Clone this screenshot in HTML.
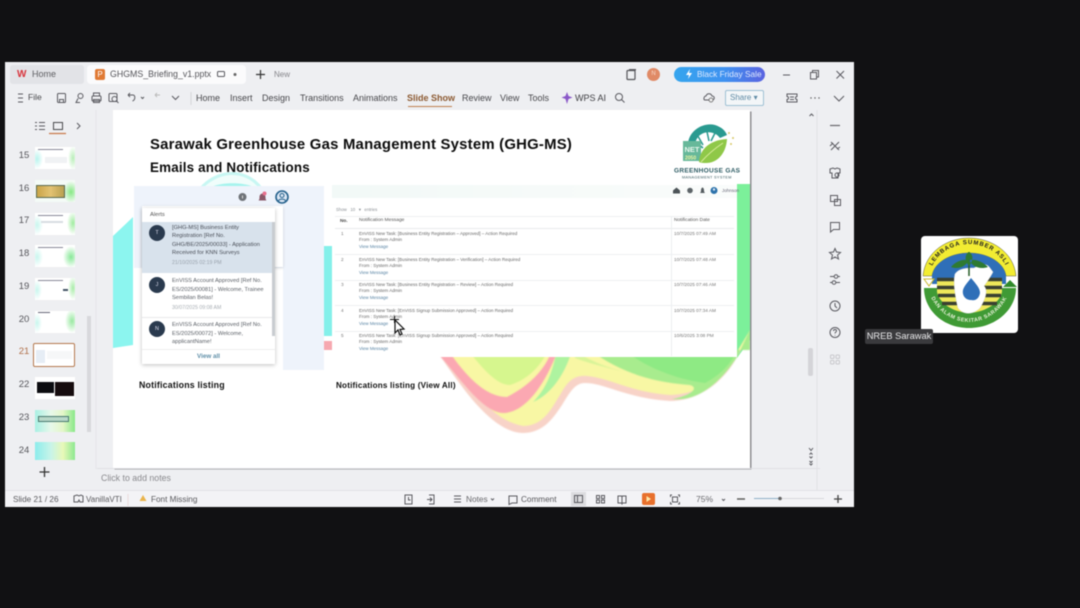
<!DOCTYPE html>
<html>
<head>
<meta charset="utf-8">
<title>GHGMS Briefing</title>
<style>
html,body{margin:0;padding:0;width:1080px;height:608px;overflow:hidden;background:#111113;}
body{font-family:"Liberation Sans",sans-serif;color:#4a4a4e;position:relative;}
.a{position:absolute;white-space:nowrap;}
#win{position:absolute;left:5px;top:62px;width:849px;height:445px;background:#eeeff2;overflow:hidden;}
#root{position:absolute;left:0;top:0;width:1080px;height:608px;filter:blur(.45px);}
.t{font-size:9px;line-height:11px;color:#47474b;}
.th{position:absolute;left:35px;width:40px;height:22px;background:#fff;overflow:hidden;}
.n{position:absolute;left:15px;width:18px;font-size:9.5px;color:#55555a;text-align:center;line-height:12px;}
svg{position:absolute;overflow:visible;}
.ic{fill:none;stroke:#5a5a60;stroke-width:1;}
.r1{font-size:4.500px;color:#666;line-height:6.400px;left:246px;}
.r0{font-size:4.700px;color:#777;line-height:6.400px;left:228px;}
.r2{font-size:4.700px;color:#777;line-height:6.400px;left:561px;}
.rl{left:222px;width:399px;height:1px;background:#eef0f2;}
</style>
</head>
<body>
<div id="root">
<div id="win"></div>

<!-- tab bar -->
<div class="a" style="left:10px;top:65px;width:74px;height:19px;background:#e2e3e7;border-radius:3px;"></div>
<div class="a" style="left:87px;top:65px;width:159px;height:19px;background:#fbfbfc;border-radius:4px;"></div>
<div class="a" style="left:17px;top:69px;font-size:10px;font-weight:bold;color:#d8343c;line-height:11px;">W</div>
<div class="a t" style="left:32px;top:69px;color:#5e5e62;">Home</div>
<div class="a" style="left:95px;top:69px;width:10px;height:11px;background:#e07a34;border-radius:2px;color:#fff;font-size:8px;line-height:11px;text-align:center;">P</div>
<div class="a t" style="left:110px;top:69px;color:#55555a;font-size:8.800px;">GHGMS_Briefing_v1.pptx</div>
<svg style="left:0;top:0" width="1" height="1"><rect class="ic" x="217.500" y="71.500" width="7" height="5" rx="1"/><circle cx="235" cy="74.500" r="1.500" fill="#666"/>
<path class="ic" style="stroke:#333;stroke-width:1.200" d="M256 74.500h9M260.500 70v9"/></svg>
<div class="a" style="left:274px;top:70px;font-size:8px;color:#85858a;line-height:10px;">New</div>
<svg style="left:0;top:0" width="1" height="1"><rect x="627" y="70.500" width="8" height="9" rx="1" fill="none" stroke="#55555a" stroke-width="1.200"/><path class="ic" d="M629 69.500h6.500v1"/></svg>
<div class="a" style="left:647px;top:68px;width:13px;height:13px;border-radius:50%;background:#e08a66;color:#f8d8c8;font-size:6px;line-height:13px;text-align:center;">N</div>
<div class="a" style="left:674px;top:67px;width:91px;height:15px;border-radius:8px;background:linear-gradient(90deg,#35a5ee 0%,#3f92f0 55%,#5a63e0 100%);color:#dfeaff;font-size:8.300px;line-height:15px;text-indent:23px;">Black Friday Sale</div>
<svg style="left:0;top:0" width="1" height="1"><path d="M690 69l-4 6h3l-1 4 4-6h-3z" fill="#fff"/>
<path class="ic" d="M783 75h7"/><rect class="ic" x="810.500" y="72.500" width="6" height="6.500"/><path class="ic" d="M812.500 72.500v-2h6v6.500h-2"/><path class="ic" d="M836.500 71l7.500 7.500M844 71l-7.500 7.500"/></svg>

<!-- menu bar -->
<svg style="left:0;top:0" width="1" height="1"><path class="ic" d="M18 94h5M18 98h5M18 102h5"/>
<rect class="ic" x="57.500" y="93.500" width="8" height="9" rx="1"/><path class="ic" d="M59.500 99.500h4v3h-4z"/>
<circle class="ic" cx="80.500" cy="96" r="2.500"/><path class="ic" d="M78 98.500l-2 4h4"/>
<rect class="ic" x="92" y="96" width="9" height="5" rx="1"/><path class="ic" d="M93.500 96v-3h6v3M93.500 99.500h6v3h-6z"/>
<rect class="ic" x="109" y="93.500" width="8" height="8" rx="1"/><circle class="ic" cx="114.500" cy="99" r="2.500"/><path class="ic" d="M116.500 101l2 2"/>
<path class="ic" d="M128 95h5c2.500 0 2.500 5-.5 6M128 95l2-2M128 95l2 2"/><path class="ic" d="M141 97l1.500 1.500 1.500-1.500"/>
<path class="ic" style="stroke:#bbb" d="M155 95h5M155 95l2-2M155 95l2 2"/>
<path class="ic" d="M172 96l3.500 3.500 3.500-3.500"/><path d="M191 92v13" stroke="#d5d5d9"/></svg>
<div class="a t" style="left:28px;top:92px;font-size:8.500px;">File</div>
<div class="a t" style="left:196px;top:93px;">Home</div>
<div class="a t" style="left:230px;top:93px;">Insert</div>
<div class="a t" style="left:262px;top:93px;">Design</div>
<div class="a t" style="left:300px;top:93px;">Transitions</div>
<div class="a t" style="left:353px;top:93px;">Animations</div>
<div class="a t" style="left:407px;top:93px;color:#8c5a32;font-weight:bold;">Slide Show</div>
<div class="a" style="left:408px;top:106px;width:44px;height:1px;background:#c08050;"></div>
<div class="a t" style="left:462px;top:93px;">Review</div>
<div class="a t" style="left:500px;top:93px;">View</div>
<div class="a t" style="left:528px;top:93px;">Tools</div>
<svg style="left:0;top:0" width="1" height="1"><path d="M567 92l1.500 4 4 1.500-4 1.500-1.500 5-1.500-5-4-1.500 4-1.500z" fill="#8a58c8"/>
<circle class="ic" cx="619" cy="97" r="3.500"/><path class="ic" d="M621.500 99.500l3 3"/>
<path class="ic" d="M705 100h7c3 0 3-4 0-4-1-3-5-3-6 0-2 0-3 4-1 4z"/><circle cx="711" cy="100" r="2" fill="#eee" stroke="#666" stroke-width=".8"/>
<path class="ic" d="M787 94h10v2.500a1.500 1.500 0 000 3V102h-10v-2.500a1.500 1.500 0 000-3zM790 97h4M790 99.500h4"/>
<circle cx="811" cy="98" r=".7" fill="#555"/><circle cx="815" cy="98" r=".7" fill="#555"/><circle cx="819" cy="98" r=".7" fill="#555"/>
<path class="ic" d="M834 96l5 5 5-5"/></svg>
<div class="a t" style="left:575px;top:93px;color:#3e3e42;">WPS AI</div>
<div class="a" style="left:725px;top:90px;width:37px;height:14px;border:1px solid #9fc1d4;border-radius:2px;background:#f3f6f8;color:#5f8ba5;font-size:8px;line-height:14px;text-indent:4px;">Share &#9662;</div>

<!-- left panel -->
<svg style="left:0;top:0" width="1" height="1"><path class="ic" d="M35 122.500h2M39 122.500h6M35 126h2M39 126h6M35 129.500h2M39 129.500h6"/>
<rect x="53.500" y="122.500" width="9" height="7" fill="none" stroke="#4a4a4e"/><path d="M49 133.500h17" stroke="#c9794a" stroke-width="1.200"/>
<path class="ic" d="M77 123l3 3-3 3"/>
<path d="M96 110v359" stroke="#e4e4e8"/><path d="M44.500 467v10M39.500 472h10" stroke="#333" stroke-width="1.300"/></svg>
<div class="a" style="left:87px;top:316px;width:4px;height:116px;background:#d8d8dc;"></div>

<div class="n" style="top:150px">15</div><div class="n" style="top:183px">16</div><div class="n" style="top:215px">17</div><div class="n" style="top:248px">18</div><div class="n" style="top:281px">19</div><div class="n" style="top:314px">20</div><div class="n" style="top:346px;color:#b0704a">21</div><div class="n" style="top:379px">22</div><div class="n" style="top:412px">23</div><div class="n" style="top:445px">24</div>

<div class="th" style="top:147px;background:radial-gradient(ellipse 6px 10px at 2px 12px,#b8f4ee,transparent),radial-gradient(ellipse 5px 12px at 38px 11px,#b8eeb8,transparent),#fff;"><div class="a" style="left:3px;top:2px;width:25px;height:1px;background:#889;"></div><div class="a" style="left:10px;top:10px;width:22px;height:6px;background:#f0f2f4;"></div></div>
<div class="th" style="top:180px;background:radial-gradient(ellipse 8px 11px at 36px 12px,#86e884,transparent),#f4fbf6;"><div class="a" style="left:1px;top:5px;width:29px;height:13px;background:linear-gradient(90deg,#c9a548,#e3c272,#b8a050);border:1px solid #5a6a50;box-sizing:border-box;"></div></div>
<div class="th" style="top:213px;background:radial-gradient(ellipse 6px 10px at 2px 12px,#c8f6ee,transparent),radial-gradient(ellipse 6px 12px at 38px 10px,#a0eca0,transparent),#fff;"><div class="a" style="left:3px;top:2px;width:25px;height:1px;background:#889;"></div><div class="a" style="left:6px;top:8px;width:22px;height:2px;background:#d8dde2;"></div></div>
<div class="th" style="top:245px;background:radial-gradient(ellipse 6px 10px at 2px 12px,#c8f6ee,transparent),radial-gradient(ellipse 8px 11px at 36px 12px,#88e898,transparent),#fff;"><div class="a" style="left:3px;top:2px;width:25px;height:1px;background:#889;"></div></div>
<div class="th" style="top:278px;background:radial-gradient(ellipse 5px 10px at 2px 12px,#c8f6ee,transparent),radial-gradient(ellipse 5px 12px at 38px 10px,#a8eca8,transparent),#fff;"><div class="a" style="left:3px;top:2px;width:25px;height:1px;background:#889;"></div><div class="a" style="left:28px;top:11px;width:5px;height:2px;background:#456;"></div></div>
<div class="th" style="top:311px;background:radial-gradient(ellipse 5px 10px at 2px 12px,#c8f6ee,transparent),radial-gradient(ellipse 7px 12px at 37px 10px,#98e8a0,transparent),#fff;"><div class="a" style="left:3px;top:1px;width:12px;height:1px;background:#667;"></div></div>
<div class="a" style="left:33px;top:343px;width:42px;height:24px;border:1px solid #b5794e;border-radius:2px;background:#fff;box-sizing:border-box;"></div>
<div class="a" style="left:36px;top:350px;width:9px;height:13px;background:#e6edf5;"></div><div class="a" style="left:47px;top:351px;width:25px;height:8px;background:#f6f7f8;"></div>
<div class="th" style="top:377px;"><div class="a" style="left:2px;top:5px;width:17px;height:11px;background:#0c0c10;"></div><div class="a" style="left:20px;top:5px;width:19px;height:14px;background:#160c0e;"></div></div>
<div class="th" style="top:410px;background:linear-gradient(90deg,#a8f0e4 0%,#e8f8ea 40%,#e4f6c8 70%,#88e888 100%);"><div class="a" style="left:3px;top:6px;width:29px;height:4px;border:1px solid #4a7a70;background:#b8d8c8;"></div></div>
<div class="th" style="top:442px;height:18px;background:linear-gradient(90deg,#8cecec 0%,#c8f4e8 40%,#e8f8b8 70%,#8ce890 100%);"></div>

<!-- slide -->
<div class="a" style="left:113px;top:110px;width:637px;height:358px;background:#fff;box-shadow:1.500px 1.500px 0 #8e8e92;overflow:hidden;">
<svg style="left:0;top:0" width="637" height="358" viewBox="113 110 637 358">
<!-- left cyan -->
<path d="M113 236L133 217V345L113 348Z" fill="#8cf5ef"/>
<!-- top arc -->
<path d="M200 187C210 176 222 172 232 172 245 172 255 178 262 187Z" fill="#c8f7f3"/>
<path d="M204 187C214 178 224 175 232 175 243 175 252 180 258 187Z" fill="#f0fdfb"/>
<path d="M211 187C222 182 243 182 254 187Z" fill="#a6f4ee"/>
<!-- cyan / pink strip -->
<path d="M324 246H332V336H324Z" fill="#84f0ea"/><path d="M324 341H332V350H324Z" fill="#f6a8b0"/>
<!-- right green -->
<path d="M737 184H750V340L737 358Z" fill="#7cf09a"/>
<!-- wave -->
<g style="filter:blur(.5px)">
<path d="M436 350C455 378 470 398 480 408 495 424 510 433 523 433 545 433 555 415 562 405 570 392 575 383 585 383 605 383 625 398 670 401 700 401 725 380 737 357L750 335V350Z" fill="#f8d3c8"/>
<path d="M440 350C470 385 490 420 523 426 545 426 553 405 560 395 568 380 575 375 587 376 610 378 630 392 670 395 700 394 722 378 735 355L750 330V350Z" fill="#f8f7a4"/>
<path d="M590 350C620 372 650 382 690 385 700 388 690 396 672 399 700 402 722 380 737 357L750 330V350Z" fill="#a8ec8e"/>
<path d="M625 350C645 368 680 380 705 383 722 374 732 362 737 350Z" fill="#8eea84"/>
<path d="M575 350C590 362 610 368 625 372 600 366 585 362 575 358Z" fill="#d8f498"/>
<path d="M468 350C485 372 498 385 510 385 526 380 540 368 548 350Z" fill="#d6f68e"/>
<path d="M436 352C455 370 480 412 503 413 525 413 545 385 558 350H552C545 370 530 385 507 397 485 397 465 375 448 350Z" fill="#fba8b2"/>
<path d="M557 350C552 375 545 390 533 402 550 395 565 375 572 350Z" fill="#aef3a0"/>
</g>
</svg>

<div class="a" style="left:37px;top:27px;font-size:14.900px;font-weight:bold;color:#0c0c0c;line-height:17px;letter-spacing:.22px;">Sarawak Greenhouse Gas Management System (GHG-MS)</div>
<div class="a" style="left:37px;top:50px;font-size:13.400px;font-weight:bold;color:#0c0c0c;line-height:16px;letter-spacing:.18px;">Emails and Notifications</div>

<!-- left mock -->
<div class="a" style="left:21px;top:76px;width:190px;height:82px;background:#eef3fb;"></div>
<div class="a" style="left:170px;top:158px;width:41px;height:102px;background:#eef3fb;"></div>
<div class="a" style="left:29px;top:96px;width:141px;height:61px;background:#fff;box-shadow:0 1px 3px rgba(0,0,0,.14);"></div>
<svg style="left:0;top:0" width="200" height="100" viewBox="113 110 200 100">
<circle cx="242.500" cy="197" r="4" fill="#6f7378"/><path d="M242.500 195.500v3" stroke="#ddd" stroke-width="1"/>
<path d="M258.500 200.500c1-1 1-2 1-3.500 0-2 1.500-3.500 3-3.500s3 1.500 3 3.500c0 1.500 0 2.500 1 3.500z" fill="#8a5868"/><circle cx="264.500" cy="193.500" r="2" fill="#e76f8d"/>
<circle cx="282" cy="197" r="6" fill="#dce7f4" stroke="#24618c" stroke-width="1.600"/><circle cx="282" cy="195.500" r="2" fill="none" stroke="#24618c"/><path d="M278.500 201c.5-2.500 6.500-2.500 7 0" fill="none" stroke="#24618c"/>
</svg>
<div class="a" style="left:29px;top:98px;width:133px;height:156px;background:#fff;box-shadow:0 1px 4px rgba(0,0,0,.25);overflow:hidden;">
  <div class="a" style="left:8px;top:3px;font-size:5.800px;color:#555;line-height:8px;">Alerts</div>
  <div class="a" style="left:0;top:14px;width:130px;height:51px;background:#d8e2ec;"></div>
  <div class="a" style="left:130px;top:14px;width:2.500px;height:114px;background:#c8ccd0;"></div>
  <div class="a" style="left:7px;top:17px;width:16px;height:16px;border-radius:50%;background:#2a3a4e;color:#dde;font-size:5.500px;line-height:16px;text-align:center;">T</div>
  <div class="a" style="left:30px;top:16px;font-size:5.700px;color:#4a4f58;line-height:8.300px;">[GHG-MS] Business Entity<br>Registration [Ref No.<br>GHG/BE/2025/00033] - Application<br>Received for KNN Surveys</div>
  <div class="a" style="left:30px;top:51px;font-size:5.200px;color:#99a2ac;line-height:8px;">21/10/2025 02:19 PM</div>
  <div class="a" style="left:7px;top:69px;width:16px;height:16px;border-radius:50%;background:#2a3a4e;color:#dde;font-size:5.500px;line-height:16px;text-align:center;">J</div>
  <div class="a" style="left:30px;top:69px;font-size:5.700px;color:#5a5f66;line-height:8.600px;">EnVISS Account Approved [Ref No.<br>ES/2025/00081] - Welcome, Trainee<br>Sembilan Belas!</div>
  <div class="a" style="left:30px;top:96px;font-size:5.200px;color:#a8aeb4;line-height:8px;">30/07/2025 09:08 AM</div>
  <div class="a" style="left:0;top:109px;width:130px;height:1px;background:#e8e8ea;"></div>
  <div class="a" style="left:7px;top:113px;width:16px;height:16px;border-radius:50%;background:#2a3a4e;color:#dde;font-size:5.500px;line-height:16px;text-align:center;">N</div>
  <div class="a" style="left:30px;top:113px;font-size:5.700px;color:#5a5f66;line-height:8.600px;">EnVISS Account Approved [Ref No.<br>ES/2025/00072] - Welcome,<br>applicantName!</div>
  <div class="a" style="left:0;top:141px;width:133px;height:15px;background:#fff;border-top:1px solid #eee;box-sizing:border-box;text-align:center;font-size:6.300px;font-weight:bold;color:#5f8fa8;line-height:14px;">View all</div>
</div>
<div class="a" style="left:26px;top:270px;font-size:8.800px;font-weight:bold;color:#111;line-height:11px;letter-spacing:.2px;">Notifications listing</div>
<div class="a" style="left:223px;top:270px;font-size:8.100px;font-weight:bold;color:#111;line-height:11px;letter-spacing:.2px;">Notifications listing (View All)</div>

<!-- right mock -->
<div class="a" style="left:219px;top:75px;width:405px;height:172px;background:#fff;"></div>
<div class="a" style="left:219px;top:75px;width:405px;height:13px;background:linear-gradient(90deg,#f2f9f7,#fafcfb);"></div>
<svg style="left:0;top:0" width="640" height="120" viewBox="113 110 640 120">
<path d="M673 190.500l3.500-3 3.500 3v3h-7z" fill="#4d5458"/><circle cx="690" cy="190.500" r="2.800" fill="#5d6468"/><path d="M700 193c1-1 1-2 1-3 0-1.500 1-2.500 1.500-2.500s1.500 1 1.500 2.500c0 1 0 2 1 3z" fill="#555c60"/><circle cx="714" cy="190.500" r="3.500" fill="#2d72ab"/><circle cx="714" cy="189.500" r="1.200" fill="#dce7f4"/>
</svg>
<div class="a" style="left:609px;top:77px;font-size:4.500px;color:#667;line-height:7px;">Johnson</div>
<div class="a" style="left:223px;top:96px;font-size:4.300px;color:#8a8f94;line-height:7px;">Show &nbsp; 10 &nbsp; &#9662; &nbsp; entries</div>
<div class="a rl" style="top:106px;"></div>
<div class="a rl" style="top:118px;background:#e8eaec;"></div>
<div class="a" style="left:227px;top:107px;font-size:4.700px;color:#444;line-height:8px;font-weight:bold;">No.</div>
<div class="a" style="left:246px;top:107px;font-size:4.900px;color:#555;line-height:8px;">Notification Message</div>
<div class="a" style="left:561px;top:107px;font-size:4.900px;color:#555;line-height:8px;">Notification Date</div>
<div class="a" style="left:558px;top:106px;width:1px;height:140px;background:#eceef0;"></div>

<div class="a r0" style="top:121px;">1</div>
<div class="a r1" style="top:121px;">EnVISS New Task: [Business Entity Registration – Approved] – Action Required<br>From : System Admin<br><span style="color:#5a85a5">View Message</span></div>
<div class="a r2" style="top:121px;">10/7/2025 07:49 AM</div>
<div class="a rl" style="top:144px;"></div>

<div class="a r0" style="top:147px;">2</div>
<div class="a r1" style="top:147px;">EnVISS New Task: [Business Entity Registration – Verification] – Action Required<br>From : System Admin<br><span style="color:#5a85a5">View Message</span></div>
<div class="a r2" style="top:147px;">10/7/2025 07:48 AM</div>
<div class="a rl" style="top:170px;"></div>

<div class="a r0" style="top:172px;">3</div>
<div class="a r1" style="top:172px;">EnVISS New Task: [Business Entity Registration – Review] – Action Required<br>From : System Admin<br><span style="color:#5a85a5">View Message</span></div>
<div class="a r2" style="top:172px;">10/7/2025 07:46 AM</div>
<div class="a rl" style="top:195px;"></div>

<div class="a r0" style="top:198px;">4</div>
<div class="a r1" style="top:198px;">EnVISS New Task: [EnVISS Signup Submission Approved] – Action Required<br>From : System Admin<br><span style="color:#5a85a5">View Message</span></div>
<div class="a r2" style="top:198px;">10/7/2025 07:34 AM</div>
<div class="a rl" style="top:221px;"></div>

<div class="a r0" style="top:223px;">5</div>
<div class="a r1" style="top:223px;">EnVISS New Task: [EnVISS Signup Submission Approved] – Action Required<br>From : System Admin<br><span style="color:#5a85a5">View Message</span></div>
<div class="a r2" style="top:223px;">10/6/2025 3:08 PM</div>

<!-- GHG logo -->
<svg style="left:560px;top:11px" width="72" height="60" viewBox="0 0 72 60">
<path d="M15 24C15 10 30 1 42 4 48 6 52 9 54 14L47 17C42 10 31 9 25 16 23 19 22 21 22 24Z" fill="#2a9a90"/>
<path d="M22 10L30 24M33 6L36 20M44 8L38 20M19 18L30 27" stroke="#2a9a90" stroke-width="1.500"/>
<rect x="10" y="20" width="18" height="20" fill="#67b89a"/>
<text x="11.500" y="31" font-family="Liberation Sans" font-size="7.500" font-weight="bold" fill="#e9f7ee">NET</text>
<text x="12" y="38.500" font-family="Liberation Sans" font-size="5" font-weight="bold" fill="#eef5a0">2050</text>
<path d="M26 41C27 27 38 19 54 18 53 33 44 42 33 42 31 42 28 42 26 41Z" fill="#8fc848"/>
<path d="M28 41C35 33 41 28 50 22" stroke="#d8ec9a" stroke-width="1" fill="none"/>
<circle cx="56" cy="12" r="1" fill="#d8c868"/><circle cx="60" cy="17" r="1" fill="#d8c868"/><circle cx="58" cy="23" r="1" fill="#d8c868"/>
<text x="1" y="51.500" font-family="Liberation Sans" font-size="6.500" font-weight="bold" fill="#2b5a62" letter-spacing=".3">GREENHOUSE GAS</text>
<text x="9" y="57.500" font-family="Liberation Sans" font-size="3.800" fill="#33565c" letter-spacing=".35">MANAGEMENT SYSTEM</text>
</svg>

<!-- cursor -->
<svg style="left:276px;top:206px" width="16" height="22" viewBox="0 0 16 22"><path d="M6 4v13l3-3 2 5 2-1-2-4.500 4-.5z" fill="#fff" stroke="#111" stroke-width="1.200"/><path d="M1 3.500h9M5.500 0v7" stroke="#111" stroke-width="1"/></svg>
</div>

<!-- notes -->
<div class="a" style="left:101px;top:473px;font-size:8.800px;color:#8a8a8e;line-height:11px;">Click to add notes</div>

<!-- right scrollbar and rail -->
<svg style="left:0;top:0" width="1" height="1">
<path d="M97 468.500h723" stroke="#e0e0e4"/>
<path d="M817 110v381" stroke="#e2e2e6"/>
<path d="M809.500 116l2-2 2 2" class="ic"/>
<path d="M809 448l2 2.500 2-2.500" class="ic"/><path class="ic" d="M809.500 454.500l1.500-1.500 1.500 1.500M809.500 456.500l1.500 1.500 1.500-1.500M809.500 461l1.500 1.500 1.500-1.500M809.500 463.500l1.500 1.500 1.500-1.500"/>
<path d="M830 125.500h10" stroke="#66666a" stroke-width="1.200"/>
<path class="ic" d="M831 142l8 8M839 142l-8 8M830 146l3-3M837 149l3-2"/>
<path class="ic" d="M830 169l3-1 2 1 2-1 3 1v4h-2v5h-6v-5h-2z"/><circle class="ic" cx="837" cy="175" r="2"/>
<rect class="ic" x="830.500" y="195.500" width="7" height="6"/><rect class="ic" x="834.500" y="199.500" width="6" height="6" fill="#eeeff2"/>
<path class="ic" d="M830.500 222.500h9v7h-6l-3 2.500z"/>
<path class="ic" d="M835 248.500l1.500 3.500 4 .5-3 2.500 1 4-3.500-2-3.500 2 1-4-3-2.500 4-.5z"/>
<path class="ic" d="M830 276.500h4M838 276.500h2M830 282.500h2M836 282.500h4"/><circle class="ic" cx="836" cy="276.500" r="1.800"/><circle class="ic" cx="834" cy="282.500" r="1.800"/>
<circle class="ic" cx="835" cy="306" r="5"/><path class="ic" d="M835 303v3l2 2"/>
<circle class="ic" cx="835" cy="332.500" r="5"/><path class="ic" d="M833.500 331c0-2 3-2 3 0 0 1-1.500 1-1.500 2.500M835 335v.5"/>
<g fill="none" stroke="#c8c8cc"><rect x="830.500" y="355" width="3.500" height="3.500" rx="1"/><rect x="836" y="355" width="3.500" height="3.500" rx="1"/><rect x="830.500" y="360.500" width="3.500" height="3.500" rx="1"/><rect x="836" y="360.500" width="3.500" height="3.500" rx="1"/></g>
</svg>
<div class="a" style="left:808px;top:348px;width:5px;height:28px;background:#d4d4d8;border-radius:2px;"></div>

<!-- status bar -->
<div class="a" style="left:5px;top:491px;width:849px;height:16px;background:#f3f3f6;"></div>
<div class="a" style="left:5px;top:490px;width:849px;height:1px;background:#e2e2e6;"></div>
<div class="a" style="left:13px;top:494px;font-size:8.200px;color:#5a5a5e;line-height:11px;">Slide 21 / 26</div>
<svg style="left:0;top:0" width="1" height="1"><path class="ic" d="M74 496l3-1 2 1 2-1 2 1v6h-3l-1-2-1 2h-4z"/><path d="M128 494v12" stroke="#eadada"/><path d="M143 495l3.500 6h-7z" fill="#e9b44c"/>
<rect class="ic" x="405" y="495" width="7" height="9"/><path class="ic" d="M408.500 497v3h2"/>
<path class="ic" d="M429 495h5v9h-5M427 499.500h5M430 497.500l2 2-2 2"/>
<path class="ic" d="M454 496h7M454 499h7M454 502h7"/><path class="ic" d="M491 498.500l1.500 1.500 1.500-1.500"/>
<path class="ic" d="M509 496h8v7h-5l-3 1.500z"/>
<rect x="571" y="492" width="15" height="14" fill="#dcdcdf"/><rect class="ic" x="574.500" y="495.500" width="8" height="7"/><path class="ic" d="M577.500 495.500v7"/>
<rect class="ic" x="596.500" y="495.500" width="3" height="3"/><rect class="ic" x="601.500" y="495.500" width="3" height="3"/><rect class="ic" x="596.500" y="500" width="3" height="3"/><rect class="ic" x="601.500" y="500" width="3" height="3"/>
<path class="ic" d="M618 496h3.500l.5 1 .5-1h3.500v7h-3.500l-.5 1-.5-1h-3.500zM622 497v6"/>
<path class="ic" d="M672 495h-1.500v2M678 495h1.500v2M672 504h-1.500v-2M678 504h1.500v-2"/><rect class="ic" x="672.500" y="497" width="5" height="5"/>
<path class="ic" d="M722 499l1.500 1.500 1.500-1.500"/>
<path d="M737 499h8" stroke="#555" stroke-width="1.400"/><path d="M754 498.500h25" stroke="#8fb0c8" stroke-width="1"/><path d="M780 498.500h44" stroke="#d8d8dc"/><circle cx="780" cy="498.500" r="1.800" fill="#666"/>
<path d="M834 499h8M838 495v8" stroke="#444" stroke-width="1.300"/></svg>
<div class="a" style="left:86px;top:494px;font-size:8px;color:#5a5a5e;line-height:11px;">VanillaVTI</div>
<div class="a" style="left:151px;top:494px;font-size:8.200px;color:#5a5a5e;line-height:11px;">Font Missing</div>
<div class="a" style="left:466px;top:494px;font-size:8.300px;color:#6a6a6e;line-height:11px;">Notes</div>
<div class="a" style="left:521px;top:494px;font-size:8.200px;color:#5a5a5e;line-height:11px;">Comment</div>
<div class="a" style="left:642px;top:493px;width:13px;height:12px;background:#e8702c;border-radius:2px;"></div>
<svg style="left:0;top:0" width="1" height="1"><path d="M646.500 496l4.500 3-4.500 3z" fill="#ffe8a8"/></svg>
<div class="a" style="left:696px;top:494px;font-size:8.500px;color:#6a6a6e;line-height:11px;">75%</div>

<!-- participant tile -->
<div class="a" style="left:921px;top:236px;width:97px;height:97px;background:#fff;border-radius:4px;overflow:hidden;">
<svg style="left:0;top:0" width="97" height="97" viewBox="0 0 97 97">
<defs>
<path id="arcT" d="M9 37C12 20 30 8 48 8 66 8 84 20 87 37"/>
<path id="arcB" d="M9 59C16 76 32 86 48 86 64 86 80 76 87 59"/>
</defs>
<path d="M2 40C4 16 26 2 48 2 70 2 93 16 95 40H85C83 26 66 17 48 17 30 17 13 26 11 40Z" fill="#f2ec32" stroke="#333" stroke-width=".4"/>
<path d="M11 40C13 26 30 17 48 17 66 17 83 26 85 40V48H11Z" fill="#2f6fb8"/>
<path d="M3 52H95C95 74 74 92 48 92 22 92 3 74 3 52Z" fill="#3f9a35"/>
<path d="M3 43H13L8 50Z" fill="#fff" stroke="#c8b830" stroke-width="1"/>
<path d="M82 51L89 44 96 51Z" fill="#2f8a2a"/>
<path d="M16 42H81V56C79 66 66 76 48 77 30 76 18 66 16 56Z" fill="#eee85a"/>
<path d="M16 43.500H81M16 51.500H81M17 59.500H80M21 67.500H76" stroke="#3a4030" stroke-width="3.500"/>
<path d="M34 38C38 32 47 32 53 32 60 28 66 27 69 32L72 36C70 40 66 46 63 50 67 54 65 62 59 72 52 79 42 79 37 72 34 60 32 46 34 38Z" fill="#fff" stroke="#ddd" stroke-width=".5"/>
<path d="M50 42C55 48 59 52 59 57 58 63 54 65 50 64 44 64 41 59 42 54 43 50 47 46 50 42Z" fill="#2f6fb8"/>
<path d="M48 40V16" stroke="#255a25" stroke-width="1.500"/>
<path d="M48 16C44 18 43 24 48 30 53 24 52 18 48 16ZM48 24C42 23 35 25 30 31 38 34 45 30 48 24ZM48 24C54 23 61 25 67 31 58 34 51 30 48 24Z" fill="#2e7a32"/>
<text font-family="Liberation Sans" font-size="6" font-weight="bold" fill="#222" letter-spacing=".9" text-anchor="middle"><textPath href="#arcT" startOffset="50%">LEMBAGA SUMBER ASLI</textPath></text>
<text font-family="Liberation Sans" font-size="5.400" font-weight="bold" fill="#e8f0d8" letter-spacing=".5" text-anchor="middle"><textPath href="#arcB" startOffset="50%">DAN ALAM SEKITAR SARAWAK</textPath></text>
</svg>
</div>
<div class="a" style="left:865px;top:329px;width:68px;height:15px;background:#3a3a3d;border-radius:2px;color:#e8e8ea;font-size:9.300px;line-height:15px;text-align:center;">NREB Sarawak</div>
</div>
</body>
</html>
